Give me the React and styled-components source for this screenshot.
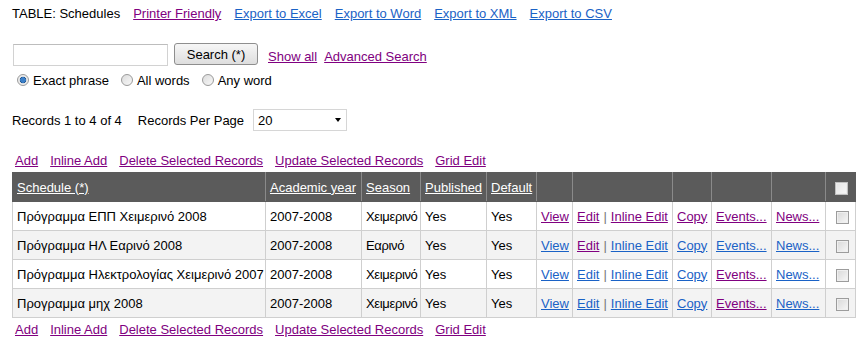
import React from 'react';
import styled, { createGlobalStyle } from 'styled-components';

const colors = {
	visited: '#800080',
	link: '#1a62c6',
	text: '#000',
	header: '#5b5b5b',
	border: '#cfcfcf',
	stripe: '#f3f3f3',
};

const GlobalStyle = createGlobalStyle`
	body {
		margin: 0;
		background: #fff;
		font-family: "Liberation Sans", Arial, sans-serif;
		font-size: 13px;
		color: ${colors.text};
	}
`;

const Page = styled.div`
	padding: 6px 0 0 12px;
	width: 843px;
`;

const Link = styled.a`
	color: ${(p) => (p.$visited ? colors.visited : colors.link)};
	text-decoration: underline;
	cursor: pointer;
	white-space: nowrap;
`;

const TopBar = styled.div`
	display: flex;
	gap: 13px;
	line-height: 16px;
`;

const SearchRow = styled.div`
	display: flex;
	align-items: center;
	margin-top: 21px;
	height: 22px;
`;

const SearchInput = styled.input`
	box-sizing: border-box;
	width: 155px;
	height: 22px;
	margin: 2px 6px 0 1px;
	border: 1px solid #d2d2d2;
	border-top-color: #bdbdbd;
	padding: 0 3px;
	font: inherit;
`;

const Button = styled.button`
	box-sizing: border-box;
	width: 84px;
	height: 22px;
	border: 1px solid #8e8e8e;
	border-radius: 3px;
	background: linear-gradient(#f6f6f6, #dedede);
	font-family: inherit;
	font-size: 13px;
	padding: 0;
	margin-right: 10px;
`;

const SearchLinks = styled.div`
	display: flex;
	gap: 7px;
	margin-top: 5px;
`;

const RadioRow = styled.div`
	display: flex;
	align-items: center;
	margin-top: 7px;
	height: 16px;
	padding-left: 5px;
`;

const RadioLabel = styled.label`
	display: flex;
	align-items: center;
	gap: 4px;
	margin-right: 12px;
`;

const RadioDot = styled.span`
	box-sizing: border-box;
	width: 12px;
	height: 12px;
	border-radius: 50%;
	border: 1px solid #9a9a9a;
	background: ${(p) =>
		p.$checked
			? 'radial-gradient(circle, #3b7fc8 0 2.5px, #1c4f87 3px, #e8e8e8 3.6px, #f6f6f6)'
			: 'linear-gradient(135deg, #dcdcdc, #f8f8f8)'};
`;

const RecordsRow = styled.div`
	display: flex;
	align-items: center;
	margin-top: 21px;
	height: 22px;
`;

const RecordsText = styled.span`
	margin-right: ${(p) => p.$gap}px;
`;

const Select = styled.div`
	box-sizing: border-box;
	width: 94px;
	height: 22px;
	border: 1px solid #d6d6d6;
	display: flex;
	align-items: center;
	justify-content: space-between;
	padding: 0 5px 0 4px;
`;

const Caret = styled.span`
	width: 0;
	height: 0;
	border-left: 3.5px solid transparent;
	border-right: 3.5px solid transparent;
	border-top: 4px solid #000;
`;

const ActionBar = styled.div`
	display: flex;
	gap: 12px;
	padding-left: 3px;
	line-height: 16px;
	margin-top: ${(p) => p.$top}px;
`;

const Table = styled.table`
	border-collapse: collapse;
	table-layout: fixed;
	width: 843px;
	margin-top: 3px;
`;

const HeadCell = styled.th`
	background: ${colors.header};
	color: #fff;
	font-weight: normal;
	text-align: left;
	height: 28px;
	padding: 0 2px 0 4px;
	border: 1px solid #8a8a8a;
	border-top-color: ${colors.header};
	border-bottom-color: ${colors.header};
	white-space: nowrap;
	overflow: hidden;

	&:first-child {
		border-left-color: ${colors.header};
	}
	&:last-child {
		border-right-color: ${colors.header};
		text-align: center;
	}
	a {
		color: #fff;
		text-decoration: underline;
	}
`;

const Row = styled.tr`
	background: ${(p) => (p.$odd ? colors.stripe : '#fff')};
`;

const Cell = styled.td`
	height: 28px;
	padding: 0 ${(p) => (p.$tight ? 0 : 1)}px 0 4px;
	border: 1px solid ${colors.border};
	white-space: nowrap;
	overflow: hidden;
	letter-spacing: ${(p) => (p.$tight ? '-0.35px' : 'normal')};
	text-align: ${(p) => (p.$center ? 'center' : 'left')};
`;

const Sep = styled.span`
	color: #777;
	margin: 0 4px;
`;

const Check = styled.span`
	display: inline-block;
	box-sizing: border-box;
	width: 13px;
	height: 13px;
	vertical-align: middle;
	border: 1px solid ${(p) => (p.$head ? '#c0c0c0' : '#9c9c9c')};
	background: ${(p) =>
		p.$head
			? 'linear-gradient(135deg, #e4e4e4, #f8f8f8)'
			: 'linear-gradient(135deg, #d8d8d8, #f7f7f7)'};
	box-shadow: inset 0 0 0 1px ${(p) => (p.$head ? '#ececec' : '#efefef')};
`;

const widths = [253, 96, 59, 66, 50, 36, 100, 39, 60, 54, 30];

const rows = [
	{
		name: 'Πρόγραμμα ΕΠΠ Χειμερινό 2008',
		season: 'Χειμερινό',
		v: [true, true, true, true, true, true],
	},
	{
		name: 'Πρόγραμμα ΗΛ Εαρινό 2008',
		season: 'Εαρινό',
		v: [false, true, false, false, false, false],
	},
	{
		name: 'Πρόγραμμα Ηλεκτρολογίας Χειμερινό 2007',
		season: 'Χειμερινό',
		v: [false, false, false, false, true, false],
	},
	{
		name: 'Προγραμμα μηχ 2008',
		season: 'Χειμερινό',
		v: [false, false, false, false, true, false],
	},
];

function Actions({ top }) {
	return (
		<ActionBar $top={top}>
			<Link $visited>Add</Link>
			<Link $visited>Inline Add</Link>
			<Link $visited>Delete Selected Records</Link>
			<Link $visited>Update Selected Records</Link>
			<Link $visited>Grid Edit</Link>
		</ActionBar>
	);
}

function App() {
	return (
		<>
			<GlobalStyle />
			<Page>
				<TopBar>
					<span>TABLE: Schedules</span>
					<Link $visited>Printer Friendly</Link>
					<Link>Export to Excel</Link>
					<Link>Export to Word</Link>
					<Link>Export to XML</Link>
					<Link>Export to CSV</Link>
				</TopBar>

				<SearchRow>
					<SearchInput type='text' />
					<Button>Search (*)</Button>
					<SearchLinks>
						<Link $visited>Show all</Link>
						<Link $visited>Advanced Search</Link>
					</SearchLinks>
				</SearchRow>

				<RadioRow>
					<RadioLabel>
						<RadioDot $checked />
						Exact phrase
					</RadioLabel>
					<RadioLabel>
						<RadioDot />
						All words
					</RadioLabel>
					<RadioLabel>
						<RadioDot />
						Any word
					</RadioLabel>
				</RadioRow>

				<RecordsRow>
					<RecordsText $gap={16}>Records 1 to 4 of 4</RecordsText>
					<RecordsText $gap={9}>Records Per Page</RecordsText>
					<Select>
						<span>20</span>
						<Caret />
					</Select>
				</RecordsRow>

				<Actions top={22} />

				<Table>
					<colgroup>
						{widths.map((w, i) => (
							<col key={i} style={{ width: w }} />
						))}
					</colgroup>
					<thead>
						<tr>
							<HeadCell><a>Schedule (*)</a></HeadCell>
							<HeadCell><a>Academic year</a></HeadCell>
							<HeadCell><a>Season</a></HeadCell>
							<HeadCell><a>Published</a></HeadCell>
							<HeadCell><a>Default</a></HeadCell>
							<HeadCell />
							<HeadCell />
							<HeadCell />
							<HeadCell />
							<HeadCell />
							<HeadCell><Check $head /></HeadCell>
						</tr>
					</thead>
					<tbody>
						{rows.map((r, i) => (
							<Row key={i} $odd={i % 2 === 1}>
								<Cell>{r.name}</Cell>
								<Cell>2007-2008</Cell>
								<Cell $tight>{r.season}</Cell>
								<Cell>Yes</Cell>
								<Cell>Yes</Cell>
								<Cell><Link $visited={r.v[0]}>View</Link></Cell>
								<Cell>
									<Link $visited={r.v[1]}>Edit</Link>
									<Sep>|</Sep>
									<Link $visited={r.v[2]}>Inline Edit</Link>
								</Cell>
								<Cell><Link $visited={r.v[3]}>Copy</Link></Cell>
								<Cell><Link $visited={r.v[4]}>Events...</Link></Cell>
								<Cell><Link $visited={r.v[5]}>News...</Link></Cell>
								<Cell $center><Check /></Cell>
							</Row>
						))}
					</tbody>
				</Table>

				<Actions top={4} />
			</Page>
		</>
	);
}

export default App;
